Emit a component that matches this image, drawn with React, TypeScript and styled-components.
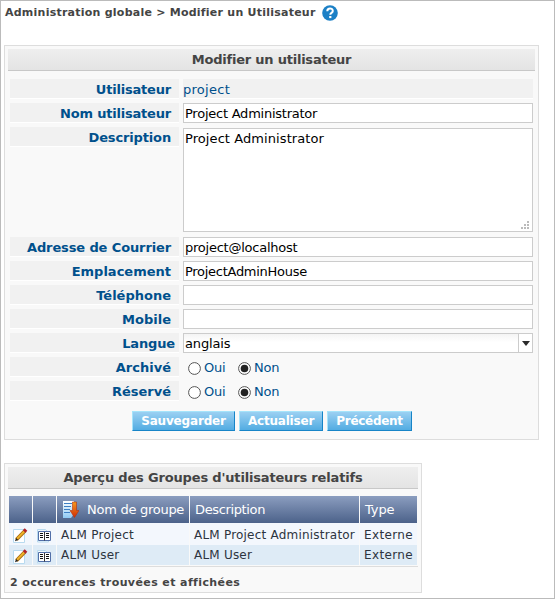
import React from 'react';
import styled, { createGlobalStyle } from 'styled-components';

const Global = createGlobalStyle`
  * { box-sizing: border-box; }
  html, body { margin: 0; padding: 0; background: #fff; }
  body { font-family: "DejaVu Sans", Verdana, sans-serif; font-size: 13px; overflow: hidden; }
`;

const Page = styled.main`
  width: 555px;
  height: 599px;
  border: 1px solid #bbb;
  padding: 0 0 0 3px;
  background: #fff;
`;

const Text = styled.span<{ $ls?: number }>`
  letter-spacing: ${(p) => p.$ls ?? 0}px;
  white-space: nowrap;
`;

const Breadcrumb = styled.header`
  display: flex;
  align-items: center;
  gap: 6px;
  height: 24px;
  padding-left: 1px;
  margin-bottom: 20px;
  font-size: 11px;
  font-weight: bold;
  color: #444;
  line-height: 24px;
`;

const Panel = styled.section<{ $w: number; $h: number }>`
  width: ${(p) => p.$w}px;
  height: ${(p) => p.$h}px;
  border: 1px solid #ddd;
  background: #f9f9f9;
  padding: 3px;
`;

const PanelTitle = styled.h2`
  margin: 0;
  height: 22px;
  border-bottom: 1px solid #c8c8c8;
  background: linear-gradient(#eee, #e4e4e4);
  color: #444;
  font-size: 13px;
  font-weight: bold;
  line-height: 21px;
  text-align: center;
`;

const Form = styled.form`
  display: grid;
  grid-template-columns: 169px 350px;
  column-gap: 4px;
  row-gap: 4px;
  padding: 8px 2px 0;
`;

const Label = styled.label<{ $right?: number }>`
  height: 20px;
  border-bottom: 1px solid #fff;
  background: #f1f1f1;
  color: #00508c;
  font-weight: bold;
  line-height: 21px;
  text-align: right;
  padding-right: ${(p) => p.$right ?? 8}px;
`;

const Value = styled.div`
  height: 20px;
  border-bottom: 1px solid #fff;
  background: #f1f1f1;
  color: #00508c;
  line-height: 21px;
`;

const Field = styled.div`
  display: flex;
  justify-content: space-between;
  height: 20px;
  border: 1px solid #ccc;
  background: #fff;
  color: #000;
  padding-left: 1px;
  line-height: 19px;
`;

const Area = styled(Field)`
  height: 104px;
  margin: 1px 0;
  align-items: stretch;
`;

const Grip = styled.svg`
  align-self: flex-end;
  margin: 0 3px 2px 0;
`;

const SelectField = styled(Field)`
  background: linear-gradient(#f4f4f4, #fff 45%);
`;

const Arrow = styled.span`
  display: flex;
  align-items: center;
  justify-content: center;
  width: 14px;
  border-left: 1px solid #ccc;
  background: #fff;
`;

const Radios = styled.div`
  display: flex;
  height: 20px;
  padding-left: 5px;
  color: #00508c;
  line-height: 21px;
`;

const Option = styled.span`
  display: flex;
  align-items: flex-start;
  gap: 3px;
  width: 50px;
  svg { margin-top: 5px; flex: none; }
`;

const Buttons = styled.div`
  display: flex;
  gap: 4px;
  padding: 10px 0 0 124px;
`;

const Button = styled.button<{ $w: number }>`
  width: ${(p) => p.$w}px;
  height: 20px;
  padding: 0;
  border: 1px solid;
  border-color: #a5e4fb #1784c7 #1784c7 #a5e4fb;
  background: linear-gradient(#9bd0f2, #52ace2);
  color: #fff;
  font: bold 12px/18px "DejaVu Sans", Verdana, sans-serif;
`;

const Table = styled.div`
  display: grid;
  grid-template-columns: 23px 23px 132px 169px 57px;
  column-gap: 1px;
  margin: 7px 0 0;
  padding: 0 1px 1px;
  border-bottom: 1px solid #ddd;
  color: #2d3440;
`;

const Head = styled.div`
  display: flex;
  align-items: center;
  height: 27px;
  padding-left: 5px;
  background: linear-gradient(#8b9dbf, #4c628a);
  color: #fff;
  gap: 8px;
  line-height: 29px;
`;

const Cell = styled.div<{ $alt?: boolean }>`
  display: flow-root;
  height: ${(p) => (p.$alt ? 20 : 22)}px;
  padding-left: 4px;
  overflow: hidden;
  background: ${(p) => (p.$alt ? '#deebf6' : '#f3f7fd')};
  font-size: 12px;
  line-height: ${(p) => (p.$alt ? 21 : 24)}px;
  svg { display: block; margin-top: ${(p) => (p.$alt ? 4 : 5)}px; }
`;

const Footer = styled.p`
  margin: 0;
  padding-left: 2px;
  color: #444;
  font-size: 11px;
  font-weight: bold;
  line-height: 31px;
`;

const Spacer = styled.div`
  height: 23px;
`;

const HelpIcon = () => (
  <svg width="16" height="16" viewBox="0 0 16 16">
    <circle cx="8" cy="8" r="7.8" fill="#1c80c6" />
    <path d="M5.3 6.2c0-3.7 5.5-3.5 5.5-.3 0 2-2.5 2-2.5 3.8" fill="none" stroke="#fff" strokeWidth="2" />
    <rect x="7.2" y="11" width="2.2" height="2.1" fill="#fff" />
  </svg>
);

const Radio = ({ on }: { on?: boolean }) => (
  <svg width="13" height="13" viewBox="0 0 13 13">
    <circle cx="6.5" cy="6.5" r="5.9" fill="#fff" stroke="#555" strokeWidth="1" />
    {on && <circle cx="6.5" cy="6.5" r="3.8" fill="#222" />}
  </svg>
);

const SortIcon = () => (
  <svg width="17" height="17" viewBox="0 0 17 17">
    <defs>
      <linearGradient id="sheet" x1="0" y1="0" x2="0" y2="1">
        <stop offset="0" stopColor="#fff" />
        <stop offset="1" stopColor="#8fcaf5" />
      </linearGradient>
      <linearGradient id="arrow" x1="0" y1="0" x2="0" y2="1">
        <stop offset="0" stopColor="#f49a1c" />
        <stop offset="1" stopColor="#d02c08" />
      </linearGradient>
    </defs>
    <path d="M1 0h11v13l-3 4H1z" fill="url(#sheet)" />
    <path d="M2 2.5h8M2 5.5h7M2 8.5h6M2 11.5h6" stroke="#3e7fc4" strokeWidth="1" />
    <path d="M10.5 1h4v8.5H17l-4.5 7-4.5-7h2.5z" fill="url(#arrow)" stroke="#b8320c" strokeWidth=".6" />
  </svg>
);

const EditIcon = () => (
  <svg width="15" height="15" viewBox="0 0 15 15">
    <path d="M.5 1.5h11v13H.5z" fill="#fff" stroke="#b9daef" />
    <path d="M3.5 11.5 12 2.7" stroke="#a86b12" strokeWidth="3.6" />
    <path d="M4 10.8 11.6 3" stroke="#f0b429" strokeWidth="1.8" />
    <path d="M11.2 3.4 13 1.5" stroke="#b0212b" strokeWidth="3.6" />
    <path d="m2 13.2 1-3.2 2.2 2.1z" fill="#222" />
  </svg>
);

const BookIcon = () => (
  <svg width="15" height="15" viewBox="0 0 15 15">
    <path d="M.5 1.5h8l3 3v9.5H.5z" fill="#eef7fd" stroke="#b9daef" />
    <path d="M1.5 3.5h12v9h-12z" fill="#fff" stroke="#526fa8" />
    <path d="M7.5 4v8.5" stroke="#333" />
    <path d="M3 5.5h3M3 7.5h3M3 9.5h3M9 5.5h3M9 7.5h3M9 9.5h3" stroke="#111" strokeWidth="1.2" />
  </svg>
);

const YesNo = () => (
  <Radios>
    <Option><Radio /><Text $ls={-0.2}>Oui</Text></Option>
    <Option><Radio on /><Text $ls={-0.2}>Non</Text></Option>
  </Radios>
);

const groups = [
  { name: 'ALM Project', description: 'ALM Project Administrator', type: 'Externe' },
  { name: 'ALM User', description: 'ALM User', type: 'Externe' },
];

export default function App() {
  return (
    <Page>
      <Global />
      <Breadcrumb>
        <Text $ls={0.24}>Administration globale &gt; Modifier un Utilisateur</Text>
        <HelpIcon />
      </Breadcrumb>
      <Panel $w={535} $h={395}>
        <PanelTitle><Text $ls={-0.22}>Modifier un utilisateur</Text></PanelTitle>
        <Form>
          <Label><Text $ls={-0.2}>Utilisateur</Text></Label>
          <Value><Text $ls={0.28}>project</Text></Value>
          <Label><Text $ls={-0.2}>Nom utilisateur</Text></Label>
          <Field><Text $ls={-0.24}>Project Administrator</Text></Field>
          <Label><Text $ls={-0.15}>Description</Text></Label>
          <Area>
            <Text $ls={0.08}>Project Administrator</Text>
            <Grip width="8" height="8" viewBox="0 0 8 8">
              <path d="M6 0h2v2H6zM3 3h2v2H3zM6 3h2v2H6zM0 6h2v2H0zM3 6h2v2H3zM6 6h2v2H6z" fill="#bbb" />
            </Grip>
          </Area>
          <Label><Text $ls={-0.12}>Adresse de Courrier</Text></Label>
          <Field><Text $ls={-0.24}>project@localhost</Text></Field>
          <Label><Text>Emplacement</Text></Label>
          <Field><Text $ls={-0.28}>ProjectAdminHouse</Text></Field>
          <Label><Text>Téléphone</Text></Label>
          <Field />
          <Label><Text>Mobile</Text></Label>
          <Field />
          <Label $right={4}><Text $ls={-0.15}>Langue</Text></Label>
          <SelectField>
            <Text $ls={-0.15}>anglais</Text>
            <Arrow>
              <svg width="8" height="5" viewBox="0 0 8 5"><path d="M0 0h8L4 5z" fill="#2b2b2b" /></svg>
            </Arrow>
          </SelectField>
          <Label><Text>Archivé</Text></Label>
          <YesNo />
          <Label><Text>Réservé</Text></Label>
          <YesNo />
        </Form>
        <Buttons>
          <Button $w={103}><Text $ls={-0.18}>Sauvegarder</Text></Button>
          <Button $w={84}><Text $ls={-0.2}>Actualiser</Text></Button>
          <Button $w={85}><Text $ls={-0.3}>Précédent</Text></Button>
        </Buttons>
      </Panel>
      <Spacer />
      <Panel $w={418} $h={130}>
        <PanelTitle><Text $ls={-0.17}>Aperçu des Groupes d'utilisateurs relatifs</Text></PanelTitle>
        <Table>
          <Head />
          <Head />
          <Head><SortIcon /><Text $ls={-0.27}>Nom de groupe</Text></Head>
          <Head><Text $ls={-0.36}>Description</Text></Head>
          <Head><Text $ls={-0.1}>Type</Text></Head>
          {groups.map((g, i) => (
            <React.Fragment key={g.name}>
              <Cell $alt={i % 2 === 1}><EditIcon /></Cell>
              <Cell $alt={i % 2 === 1}><BookIcon /></Cell>
              <Cell $alt={i % 2 === 1}><Text $ls={0.27}>{g.name}</Text></Cell>
              <Cell $alt={i % 2 === 1}><Text $ls={0.21}>{g.description}</Text></Cell>
              <Cell $alt={i % 2 === 1}><Text $ls={0.35}>{g.type}</Text></Cell>
            </React.Fragment>
          ))}
        </Table>
        <Footer><Text $ls={0.4}>2 occurences trouvées et affichées</Text></Footer>
      </Panel>
    </Page>
  );
}
